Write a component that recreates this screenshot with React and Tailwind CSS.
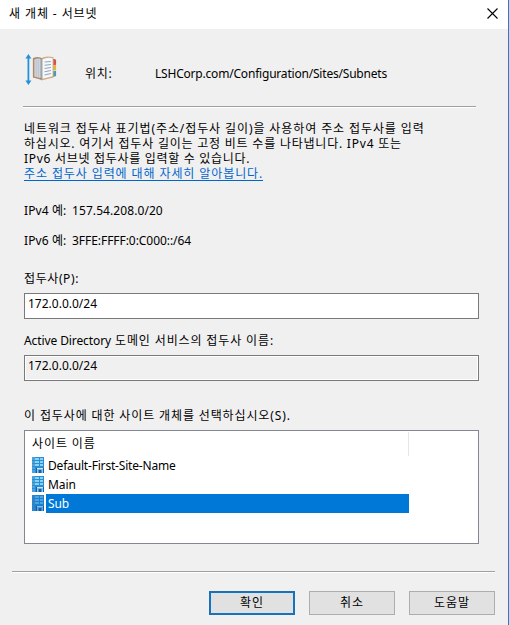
import React from "react";

function BookIcon() {
  return (
    <svg width="34" height="34" viewBox="0 0 34 34">
      <path d="M4.4 3.5v26" stroke="#2492da" strokeWidth="1.8" />
      <path d="M1.4 5.4 4.4 1l3 4.4zM1.4 27.6l3 4.4 3-4.4z" fill="#2492da" />
      <g transform="translate(0.6 0) scale(1.06 1)">
        <path d="M25.5 6h2.6q1.6.2 1.6 1.6v4.2l-4.2 1z" fill="#cf5548" />
        <path d="M25.5 12.6l4.2-.6v5l-4.2 1z" fill="#e3b343" />
        <path d="M25.5 18.6l4.2-.8v5.2l-4.2 1.6z" fill="#4d9aa9" />
        <path d="M7.8 5.2q4-2.2 7.7-.4v22l-7.7-2.2z" fill="#b08a66" />
        <path d="M15.5 5.2q5-3 11.8-1v20.2l-11.8 3z" fill="#d0ad83" />
        <path d="M9.2 6.4q3.6-1.6 7.4 0v19l-7.4-1.8z" fill="#cfd5dd" />
        <path d="M11 6.4v17.2M13 6.2v18" stroke="#b3bcc9" strokeWidth="0.7" />
        <path d="M16.8 6.2q4.6-2.4 9.6-1v18l-9.6 2.6z" fill="#f4f7fb" />
        <path
          d="M18.8 9.1l6-.7M18.8 12.3l6-.8M18.8 15.5l6-1M18.8 18.7l6-1.1M18.8 21.9l6-1.3"
          stroke="#93a4bb"
          strokeWidth="1"
        />
        <path d="M15.8 5.4v20.8" stroke="#6e7580" strokeWidth="1.8" strokeDasharray="1 1" />
      </g>
    </svg>
  );
}

function SiteIcon({ selected = false }) {
  return (
    <svg width="12" height="16" viewBox="0 0 12 16" className="mr-[2px] mt-[-1px] shrink-0">
      <path d="M0 0h12v16H0z" fill={selected ? "#1f7fcb" : "#2b8dd2"} />
      <path d="M0 0h3v16H0z" fill={selected ? "#2d86cc" : "#4ba3dc"} />
      <path
        d="M3 2h4M8 2h3M3 5h4M8 5h3M3 8h4M8 8h3"
        stroke={selected ? "#4ca6e6" : "#86d3f5"}
        strokeWidth="2"
      />
      <path d="M0 3.5h3M0 6.5h3M0 9.5h3M0 12.5h3" stroke="#2a7dbd" strokeWidth="0.6" />
      <path d="M4 11h8v5H4z" fill="#1560ab" />
      <path d="M5 11h6v1.6H5z" fill={selected ? "#7cc2f0" : "#c3e8fa"} />
      <path d="M5 12.6h1.5V16H5zM9.5 12.6H11V16H9.5z" fill={selected ? "#5aaae2" : "#8acbf0"} />
    </svg>
  );
}

function SiteRow({ name, selected = false, nameClass }) {
  return (
    <div className="flex h-[19px] items-center pl-[7px]">
      <SiteIcon selected={selected} />
      <div
        className={
          "flex h-[19px] w-[363px] items-center pl-[2px] " +
          (selected ? "bg-[#0078d7] text-white" : "")
        }
      >
        <span className={nameClass}>{name}</span>
      </div>
    </div>
  );
}

export default function App() {
  return (
    <div className="flex h-[625px] w-[509px] flex-col overflow-hidden whitespace-nowrap border-r border-[#1883d7] bg-[#f0f0f0] font-['Noto_Sans','Noto_Sans_CJK_KR',sans-serif] text-[12px] leading-[15px] text-black">
      <header className="flex h-[29px] shrink-0 items-center justify-between bg-white pb-[2px] pl-[9px] pr-[10px]">
        <h1 className="tracking-[0.9px]">새 개체 - 서브넷</h1>
        <button aria-label="닫기">
          <svg width="11" height="11" viewBox="0 0 11 11" className="block">
            <path d="M.5.5l10 10M10.5.5l-10 10" stroke="#000" strokeWidth="1.1" />
          </svg>
        </button>
      </header>

      <main className="flex flex-col pl-[24px]">
        <div className="flex h-[77px] items-center pt-[11px]">
          <div className="mt-[-6px] w-[61px]">
            <BookIcon />
          </div>
          <span className="w-[70px] tracking-[0.7px]">위치:</span>
          <span className="tracking-[-0.2px]">LSHCorp.com/Configuration/Sites/Subnets</span>
        </div>
        <div className="-ml-px h-[2px] w-[453px] border-b border-t border-b-white border-t-[#a0a0a0]" />

        <div className="mt-[13px] h-[60px]">
          <p className="tracking-[0.9px]">
            네트워크 접두사 표기법(주소/접두사 길이)을 사용하여 주소 접두사를 입력
          </p>
          <p className="tracking-[0.78px]">
            하십시오. 여기서 접두사 길이는 고정 비트 수를 나타냅니다. IPv4 또는
          </p>
          <p className="tracking-[0.7px]">IPv6 서브넷 접두사를 입력할 수 있습니다.</p>
          <a className="inline-block h-[15px] border-b border-[#0066cc] tracking-[0.9px] text-[#0066cc]">
            주소 접두사 입력에 대해 자세히 알아봅니다.
          </a>
        </div>

        <div className="mt-[22px] flex h-[15px]">
          <span className="w-[48px] tracking-[0.1px]">IPv4 예:</span>
          <span className="tracking-[0.08px]">157.54.208.0/20</span>
        </div>
        <div className="mt-[15px] flex h-[15px]">
          <span className="w-[48px] tracking-[0.1px]">IPv6 예:</span>
          <span className="tracking-[-0.05px]">3FFE:FFFF:0:C000::/64</span>
        </div>

        <label className="mt-[23px] h-[15px] tracking-[0.6px]">접두사(P):</label>
        <div className="mt-[7px] h-[26px] w-[455px] border border-[#7a7a7a] bg-white pl-[3px] pt-[2px]">
          172.0.0.0/24
        </div>
        <label className="mt-[14px] h-[15px]">
          <span className="tracking-[-0.1px]">Active Directory</span>
          <span className="tracking-[0.87px]"> 도메인 서비스의 접두사 이름:</span>
        </label>
        <div className="mt-[7px] h-[26px] w-[455px] border border-[#7a7a7a] bg-[#f0f0f0] pl-[3px] pt-[2px] shadow-[inset_0_0_0_1px_#fff]">
          172.0.0.0/24
        </div>

        <label className="mt-[27px] h-[15px] tracking-[0.87px]">
          이 접두사에 대한 사이트 개체를 선택하십시오(S).
        </label>
        <div className="mt-[7px] h-[114px] w-[455px] border border-[#828790] bg-white">
          <div className="mt-px flex h-[24px] w-[384px] items-center border-r border-[#e5e5e5] pb-[2px] pl-[7px] tracking-[0.9px]">
            사이트 이름
          </div>
          <SiteRow name="Default-First-Site-Name" nameClass="tracking-[-0.18px]" />
          <SiteRow name="Main" nameClass="tracking-[-0.1px]" />
          <SiteRow name="Sub" selected nameClass="tracking-[-0.1px]" />
        </div>
      </main>

      <div className="ml-[12px] mt-[27px] h-[2px] w-[483px] shrink-0 border-b border-t border-b-white border-t-[#a0a0a0]" />
      <footer className="mt-[18px] flex h-[24px] shrink-0 gap-[14px] pl-[209px] tracking-[0.9px]">
        <button className="w-[86px] border-2 border-[#1f70b0] bg-[#e1e1e1] pb-[2px] shadow-[inset_0_0_0_1px_#cce8f8]">
          확인
        </button>
        <button className="w-[86px] border border-[#adadad] bg-[#e1e1e1] pb-[2px]">취소</button>
        <button className="w-[86px] border border-[#adadad] bg-[#e1e1e1] pb-[2px]">도움말</button>
      </footer>
    </div>
  );
}
